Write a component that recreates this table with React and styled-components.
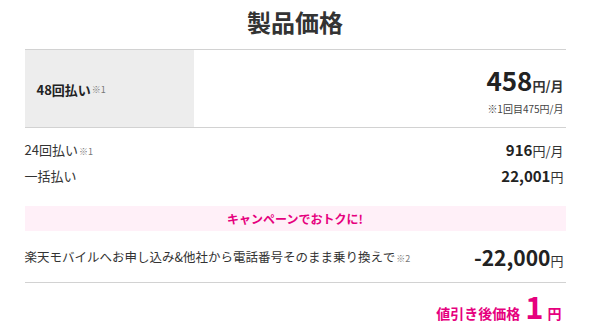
import React from "react"
import styled, { createGlobalStyle } from "styled-components"

const GlobalStyle = createGlobalStyle`
  body {
    margin: 0;
    background: #fff;
    font-family: "Noto Sans CJK JP", "Noto Sans", sans-serif;
    color: #333;
  }
`

const Wrapper = styled.section`
  width: 541px;
  margin: 0 auto;
  padding-top: 6px;
`

const Title = styled.h2`
  margin: 0;
  text-align: center;
  font-size: 24px;
  line-height: 32px;
  font-weight: 700;
  color: #333;
  padding-bottom: 11px;
  border-bottom: 1px solid #d2d2d2;
`

const MainRow = styled.div`
  display: flex;
  height: 77px;
  border-bottom: 1px solid #d2d2d2;
`

const MainLabel = styled.div`
  width: 169px;
  background: #ededed;
  display: flex;
  align-items: center;
  padding-left: 12px;
  padding-top: 1px;
  box-sizing: border-box;
  font-size: 13px;
  font-weight: 700;
  color: #222;
`

const Note = styled.span`
  font-size: 9px;
  font-weight: 400;
  color: #777;
  margin-left: 1px;
`

const MainPrice = styled.div`
  flex: 1;
  display: flex;
  flex-direction: column;
  align-items: flex-end;
  justify-content: center;
  padding-right: 2px;
  padding-top: 3px;
`

const BigNumber = styled.span`
  font-size: 26px;
  font-weight: 700;
  line-height: 30px;
  color: #222;
`

const Unit = styled.span`
  font-size: 13px;
  font-weight: 700;
`

const SubNote = styled.div`
  font-size: 10px;
  line-height: 14px;
  margin-top: 6px;
  color: #444;
`

const Rows = styled.div`
  padding-top: 12px;
  padding-bottom: 21px;
  display: flex;
  flex-direction: column;
  gap: 7px;
`

const Row = styled.div`
  display: flex;
  justify-content: space-between;
  align-items: center;
  height: 19px;
  font-size: 13px;
  color: #333;
  padding-right: 2px;
`

const Amount = styled.span`
  font-size: ${({ size }) => size || 15}px;
  font-weight: 700;
  color: #222;
`

const UnitLight = styled.span`
  font-size: ${({ size }) => size || 13}px;
  font-weight: 400;
`

const Campaign = styled.div`
  background: #fff0f8;
  height: 25px;
  display: flex;
  align-items: center;
  justify-content: center;
  font-size: 12px;
  font-weight: 700;
  color: #e6007e;
`

const DiscountRow = styled.div`
  display: flex;
  justify-content: space-between;
  align-items: center;
  height: 51px;
  border-bottom: 1px solid #d2d2d2;
  font-size: 12.5px;
  color: #333;
  padding-right: 2px;
`

const Total = styled.div`
  display: flex;
  justify-content: flex-end;
  align-items: baseline;
  padding-top: 5px;
  padding-right: 4px;
  color: #e6007e;
  font-weight: 700;
  font-size: 14px;
`

const TotalNumber = styled.span`
  font-size: 31px;
  line-height: 36px;
  margin: 0 4px 0 5px;
`

const App = () => (
  <>
    <GlobalStyle />
    <Wrapper>
      <Title>製品価格</Title>
      <MainRow>
        <MainLabel>
          48回払い<Note>※1</Note>
        </MainLabel>
        <MainPrice>
          <div>
            <BigNumber>458</BigNumber>
            <Unit>円/月</Unit>
          </div>
          <SubNote>※1回目475円/月</SubNote>
        </MainPrice>
      </MainRow>
      <Rows>
        <Row>
          <span>
            24回払い<Note>※1</Note>
          </span>
          <span>
            <Amount>916</Amount>
            <UnitLight>円/月</UnitLight>
          </span>
        </Row>
        <Row>
          <span>一括払い</span>
          <span>
            <Amount>22,001</Amount>
            <UnitLight>円</UnitLight>
          </span>
        </Row>
      </Rows>
      <Campaign>キャンペーンでおトクに!</Campaign>
      <DiscountRow>
        <span>
          楽天モバイルへお申し込み&他社から電話番号そのまま乗り換えで<Note>※2</Note>
        </span>
        <span>
          <Amount size={21}>-22,000</Amount>
          <UnitLight size={13}>円</UnitLight>
        </span>
      </DiscountRow>
      <Total>
        値引き後価格<TotalNumber>1</TotalNumber>円
      </Total>
    </Wrapper>
  </>
)

export default App
